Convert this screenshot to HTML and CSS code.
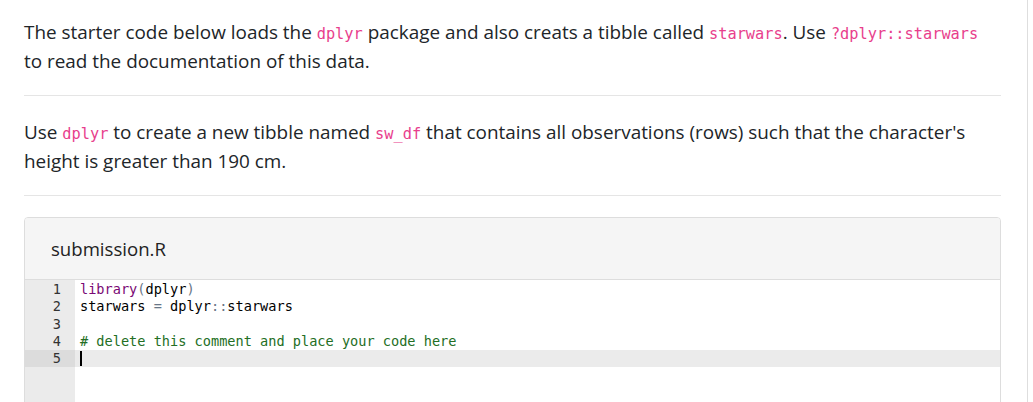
FILE: index.html
```html
<!DOCTYPE html>
<html>
<head>
<meta charset="utf-8">
<link rel="stylesheet" href="styles.css">
</head>
<body>
<div class="page">
  <p class="para">The starter code below loads the <code>dplyr</code> package and also creats a tibble called <code>starwars</code>. Use <code>?dplyr::starwars</code> to read the documentation of this data.</p>
  <hr class="rule">
  <p class="para">Use <code>dplyr</code> to create a new tibble named <code>sw_df</code> that contains all observations (rows) such that the character's height is greater than 190 cm.</p>
  <hr class="rule">
  <div class="card">
    <div class="card-header">submission.R</div>
    <div class="editor">
      <div class="line"><span class="num">1</span><span class="code"><span class="fn">library</span><span class="paren">(</span>dplyr<span class="paren">)</span></span></div>
      <div class="line"><span class="num">2</span><span class="code">starwars <span class="op">=</span> dplyr<span class="op">::</span>starwars</span></div>
      <div class="line"><span class="num">3</span><span class="code"></span></div>
      <div class="line"><span class="num">4</span><span class="code"><span class="cm"># delete this comment and place your code here</span></span></div>
      <div class="line active"><span class="num">5</span><span class="code"><span class="cursor"></span></span></div>
      <div class="line filler"><span class="num"></span><span class="code"></span></div>
    </div>
  </div>
</div>
</body>
</html>
```

FILE: styles.css
```css
html, body {
  margin: 0;
  padding: 0;
  background: #fff;
}
body {
  font-family: "Open Sans", "Noto Sans", sans-serif;
  color: #212529;
  overflow: hidden;
}
.page {
  width: 1028px;
  box-sizing: border-box;
  border-right: 1px solid #dedede;
  padding: 18px 26px 0 24px;
  min-height: 402px;
}
.para {
  margin: 0;
  font-size: 18.9px;
  line-height: 29px;
}
code {
  font-family: "DejaVu Sans Mono", "Liberation Mono", monospace;
  font-size: 15.3px;
  line-height: 1;
  color: #e83e8c;
}
.rule {
  border: 0;
  border-top: 1px solid #e5e5e5;
  margin: 19px 0 22px;
}
.rule + .card {
  margin-top: -1px;
}
.card {
  border: 1px solid #ddd;
  border-radius: 4px;
  overflow: hidden;
  height: 200px;
}
.card-header {
  background: #f5f5f5;
  border-bottom: 1px solid #ddd;
  height: 62px;
  box-sizing: border-box;
  padding: 0 26px;
  display: flex;
  align-items: center;
  font-size: 18.6px;
  color: #222;
}
.editor {
  font-family: "DejaVu Sans Mono", "Liberation Mono", monospace;
  font-size: 13.6px;
  padding-top: 1px;
  background: linear-gradient(to right, #ebebeb 50px, #fff 50px);
  height: 200px;
}
.line {
  display: flex;
  height: 17.3px;
  line-height: 17.3px;
}
.num {
  width: 50px;
  box-sizing: border-box;
  padding-right: 14px;
  text-align: right;
  color: #333;
  flex: none;
}
.code {
  padding-left: 5px;
  color: #000;
  white-space: pre;
  flex: 1;
}
.fn { color: #7a0874; }
.paren { color: #687687; }
.op { color: #687687; }
.cm { color: #236e24; }
.active .num { background: #dcdcdc; }
.active .code { background: #ebebeb; }
.cursor {
  display: inline-block;
  width: 2px;
  height: 15px;
  background: #000;
  vertical-align: middle;
  margin-top: -2px;
}
```
